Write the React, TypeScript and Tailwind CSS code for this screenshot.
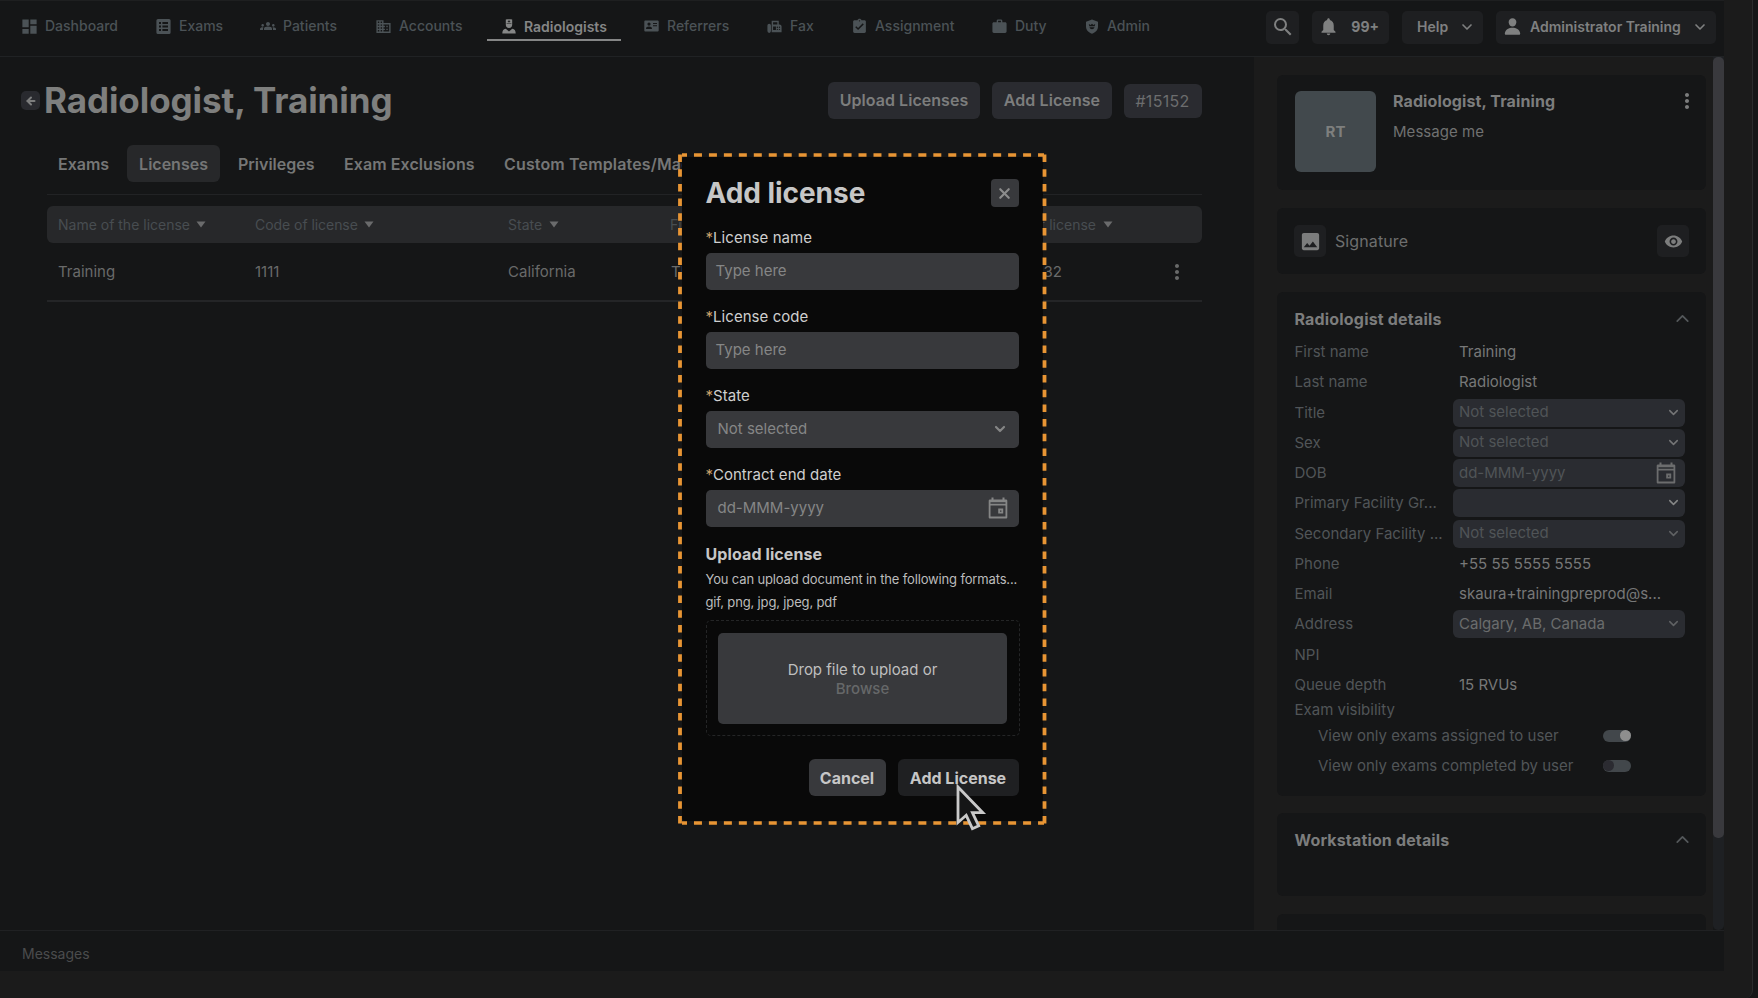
import React from "react";
import {
  MdDashboard, MdGroups, MdBusiness, MdFax, MdAssignmentTurnedIn, MdSearch, MdNotifications,
  MdImage, MdVisibility, MdMoreVert, MdWork,
} from "react-icons/md";
import { IoPerson } from "react-icons/io5";
import { ChevronDown, ChevronUp, X, ArrowLeft } from "lucide-react";

const ExamsIcon = () => (
  <svg viewBox="0 0 15 15" className="size-[15px]" fill="currentColor">
    <path fillRule="evenodd" d="M2 0h11a1.6 1.6 0 0 1 1.6 1.6v11.800A1.6 1.6 0 0 1 13 15H2A1.6 1.6 0 0 1 .4 13.400V1.600A1.6 1.6 0 0 1 2 0ZM3 3v2h2V3H3Zm3.400 0v2H12V3H6.400ZM3 6.500v2h2v-2H3Zm3.400 0v2H12v-2H6.400ZM3 10v2h2v-2H3Zm3.400 0v2H12v-2H6.400Z" />
  </svg>
);

const RadiologistIcon = () => (
  <svg viewBox="0 0 14 15" className="h-[15px] w-[14px]" fill="currentColor">
    <path fillRule="evenodd" d="M3.800.6C5.600 0 8.400 0 10.200.6V5.600a3.200 3.400 0 0 1-6.400 0V.600ZM6.600 1.200v.8h-.8v.8h.8v.8h.8v-.8h.8V2h-.8v-.8h-.8ZM4.600 4.600v.5h4.800v-.5H4.600Z" />
    <path d="M.3 14.500c0-2.800.8-4.200 3.500-4.800L7 12.600l3.200-2.900c2.700.6 3.500 2 3.500 4.800H.300Z" />
  </svg>
);

const ReferrerIcon = () => (
  <svg viewBox="0 0 15 12" className="h-[12px] w-[15px]" fill="currentColor">
    <path fillRule="evenodd" d="M1.200.5h12.600c.5 0 .9.4.9.9v9.200c0 .5-.4.9-.9.9H1.200a.9.9 0 0 1-.9-.9V1.400c0-.5.4-.9.9-.9ZM5 2.500a1.600 1.600 0 1 0 0 3.200 1.600 1.600 0 0 0 0-3.200ZM2 9h6c0-1.800-1.200-2.500-3-2.500S2 7.200 2 9Zm7-6v1h4V3H9Zm0 2.200v1h4v-1H9Z" />
  </svg>
);

const AdminIcon = () => (
  <svg viewBox="0 0 14 16" className="h-[15px] w-[14px]" fill="currentColor">
    <path fillRule="evenodd" d="M7 .4 13.400 2.800v5.200c0 3.700-2.600 6.400-6.400 7.600C3.200 14.400.6 11.700.6 8V2.800L7 .4ZM3.600 5.400l.5 2.300h5.800l.5-2.300-1.900.9L7 5 5.500 6.300l-1.900-.9Zm.7 3.500c.4 1.300 1.400 2 2.700 2s2.300-.7 2.700-2H4.300Z" />
  </svg>
);

const CalendarIcon = ({ className }: { className: string }) => (
  <svg viewBox="0 0 20 22" className={`h-[22px] w-[20px] ${className}`} fill="currentColor">
    <path fillRule="evenodd" d="M3.500.5h2v2h9v-2h2v2H18c.8 0 1.300.6 1.300 1.300v16.400c0 .7-.5 1.300-1.300 1.300H2c-.8 0-1.300-.6-1.300-1.300V3.800c0-.7.5-1.300 1.300-1.300h1.500v-2ZM2.500 5.200v1.600h15V5.200h-15Zm0 3.400v11h15v-11h-15Zm7.700 3h5v5h-5v-5Zm1.800 1.800v1.400h1.400v-1.400H12Z" />
  </svg>
);

const Triangle = () => (
  <svg viewBox="0 0 10 7" className="-ml-px h-[7px] w-[10px] text-[#6a6b6c]" fill="currentColor">
    <path d="M.5.500h9L5 6.500Z" />
  </svg>
);

type NavProps = { icon: React.ReactNode; label: string; className: string };
const NavItem = ({ icon, label, className }: NavProps) => (
  <div className={`flex shrink-0 items-center gap-[8px] ${className}`}>
    <span className="flex w-[15px] justify-center">{icon}</span>
    <span>{label}</span>
  </div>
);

const Card = ({ className, children }: { className: string; children?: React.ReactNode }) => (
  <section className={`shrink-0 rounded-[6px] bg-[#151617] ${className}`}>{children}</section>
);

const Row = ({ label, children }: { label: string; children?: React.ReactNode }) => (
  <div className="flex h-[30.250px] items-center">
    <div className="w-[158.500px] shrink-0 whitespace-nowrap text-[#515558]">{label}</div>
    {children}
  </div>
);
const Value = ({ children }: { children: React.ReactNode }) => <div className="pl-[6px] text-[#777878]">{children}</div>;
const Select = ({ text, className = "text-[#505457]", chevron = "text-[#747576]" }: { text: string; className?: string; chevron?: string }) => (
  <div className={`flex h-[28px] w-[232px] items-center justify-between rounded-[6px] bg-[#2a2c31] pl-[6px] pr-[4px] ${className}`}>
    <span className="-mt-px">{text}</span>
    <ChevronDown className={`-mt-px size-[15px] ${chevron}`} strokeWidth={2.400} />
  </div>
);
const Toggle = ({ on }: { on?: boolean }) => (
  <div className={`flex h-[12px] w-[28px] items-center rounded-full bg-[#42474b] ${on ? "justify-end" : "justify-start"}`}>
    <span className={`size-[11px] rounded-full ${on ? "bg-[#8e8e8e]" : "bg-[#2b2b31]"}`} />
  </div>
);

const Label = ({ children }: { children: React.ReactNode }) => (
  <div className="h-[30px] text-[15px] leading-[30px] tracking-[0.050px] text-[#cfcfcf]">
    <span className="text-[#c9a06a]">*</span>{children}
  </div>
);

export default function App() {
  return (
    <div className="relative flex h-[998px] w-[1758px] overflow-hidden bg-[#151617] font-['Inter',sans-serif] text-[15px] leading-[20px] text-[#7c7d7d]">
      <div className="flex h-full w-[1753px] flex-col rounded-br-[8px] border-r border-[#2a2b2c] bg-[#1b1b1b]">
        <div className="flex h-[971px] w-[1724px] flex-col bg-[#151617]">
          <header className="flex h-[57px] shrink-0 items-center border-b border-t border-b-[#202224] border-t-[#1e1f20] pl-[22px] pr-[8px]">
            <nav className="flex h-full items-center pb-[5px] text-[14px] font-medium text-[#4b5256]">
              <NavItem className="w-[134px]" icon={<MdDashboard className="size-[19px] shrink-0" />} label="Dashboard" />
              <NavItem className="w-[104px]" icon={<ExamsIcon />} label="Exams" />
              <NavItem className="w-[116px]" icon={<MdGroups className="size-[16px] shrink-0" />} label="Patients" />
              <NavItem className="w-[111px]" icon={<MdBusiness className="size-[17px] shrink-0" />} label="Accounts" />
              <div className="mr-[23px] h-[29px] w-[134px] border-b-[2px] border-[#858686] pl-[14px] pt-[5px] text-[#858686]">
                <NavItem className="font-semibold" icon={<RadiologistIcon />} label="Radiologists" />
              </div>
              <NavItem className="w-[123px]" icon={<ReferrerIcon />} label="Referrers" />
              <NavItem className="w-[85px]" icon={<MdFax className="size-[17px] shrink-0" />} label="Fax" />
              <NavItem className="w-[140px]" icon={<MdAssignmentTurnedIn className="size-[17px] shrink-0" />} label="Assignment" />
              <NavItem className="w-[92px]" icon={<MdWork className="size-[17px] shrink-0" />} label="Duty" />
              <NavItem className="w-[90px]" icon={<AdminIcon />} label="Admin" />
            </nav>
            <div className="mb-[3px] ml-auto flex gap-[13px] text-[14px] font-semibold text-[#7f8080]">
              <div className="flex h-[33px] w-[33px] items-center justify-center rounded-[5px] bg-[#1e1f21]"><MdSearch className="size-[24px]" /></div>
              <div className="flex h-[33px] w-[77px] items-center justify-between rounded-[5px] bg-[#1e1f21] pb-[1px] pl-[6px] pr-[10px] font-bold"><MdNotifications className="size-[21px]" /><span>99+</span></div>
              <div className="flex h-[33px] w-[81px] items-center justify-between rounded-[5px] bg-[#1e1f21] pb-[1px] pl-[15px] pr-[8px]"><span>Help</span><ChevronDown className="size-[16px]" strokeWidth={2.500} /></div>
              <div className="flex h-[33px] w-[220px] items-center rounded-[5px] bg-[#1e1f21] pb-[1px] pl-[7px] pr-[8px]"><IoPerson className="size-[19px]" /><span className="ml-[8px] whitespace-nowrap">Administrator Training</span><ChevronDown className="ml-auto size-[16px]" strokeWidth={2.500} /></div>
            </div>
          </header>

          <div className="flex h-[873px] shrink-0">
            <main className="w-[1254px] shrink-0">
              <div className="flex h-[62px] items-end pl-[21px]">
                <div className="flex items-center">
                  <div className="flex size-[19px] items-center justify-center rounded-[5px] bg-[#292a2f]"><ArrowLeft className="size-[12px]" strokeWidth={4} /></div>
                  <h1 className="ml-[4px] w-[784px] text-[35px] font-bold leading-[37px] tracking-[-0.080px] text-[#7e7f7e]">Radiologist, Training</h1>
                  <div className="flex h-[37px] w-[152px] items-center justify-center rounded-[6px] bg-[#2a2b30] pb-[1px] text-[16px] font-semibold tracking-[0.050px]">Upload Licenses</div>
                  <div className="ml-[12px] flex h-[37px] w-[120px] items-center justify-center rounded-[6px] bg-[#2a2b30] pb-[1px] text-[16px] font-semibold tracking-[0.080px]">Add License</div>
                  <div className="ml-[12px] flex h-[34px] w-[78px] items-center justify-center rounded-[6px] bg-[#2a2b30] pr-[1px] text-[16px] tracking-[0.300px] text-[#6c6d6e]">#15152</div>
                </div>
              </div>
              <div className="ml-[47px] mt-[26px] flex h-[50px] w-[1155px] items-start whitespace-nowrap border-b border-[#222325] text-[16px] font-semibold text-[#757676]">
                <div className="w-[80px] pl-[11px] leading-[38px]">Exams</div>
                <div className="h-[37px] w-[93px] rounded-[6px] bg-[#27282a] text-center leading-[38px]">Licenses</div>
                <div className="w-[106px] pl-[18px] leading-[38px]">Privileges</div>
                <div className="w-[178px] pl-[18px] leading-[38px] tracking-[0.080px]">Exam Exclusions</div>
                <div className="leading-[38px] tracking-[0.150px]">Custom Templates/Macros</div>
              </div>
              <div className="ml-[47px] mt-[11px] flex h-[37px] w-[1155px] items-center rounded-[6px] bg-[#27282a] pl-[11px] text-[14px] text-[#484d51]">
                <div className="flex w-[197px] items-center gap-[7px]">Name of the license <Triangle /></div>
                <div className="flex w-[253px] items-center gap-[7px] tracking-[-0.050px]">Code of license <Triangle /></div>
                <div className="flex w-[162px] items-center gap-[8px]">State <Triangle /></div>
                <div className="w-[281px]">File</div>
                <div className="flex w-[162px] items-center justify-end gap-[8px]">Number of license <Triangle /></div>
              </div>
              <div className="ml-[47px] flex h-[59px] w-[1155px] items-center border-b-2 border-[#242527] pl-[11px] text-[15px] text-[#696a6a]">
                <div className="w-[197px]">Training</div>
                <div className="w-[253px]">1111</div>
                <div className="w-[163px]">California</div>
                <div className="w-[340px]">Thumbnail</div>
                <div className="w-[51px] text-right">10232</div>
                <MdMoreVert className="ml-[103px] size-[24px]" />
              </div>
            </main>

            <aside className="flex h-[873px] w-[459px] shrink-0 flex-col overflow-hidden bg-[#1b1b1b] pl-[23px] pt-[18px]">
              <Card className="flex h-[115px] w-[429px] pl-[18px] pt-[16px]">
                <div className="flex size-[81px] items-center justify-center rounded-[6px] bg-[#42494d] text-[15px] font-bold text-[#7e7f7e]">RT</div>
                <div className="ml-[17px] flex-1">
                  <div className="text-[16px] font-bold tracking-[0.100px]">Radiologist, Training</div>
                  <div className="mt-[11px] text-[15px] tracking-[0.050px] text-[#707171]">Message me</div>
                </div>
                <MdMoreVert className="mr-[7px] mt-[-2px] size-[24px]" />
              </Card>
              <Card className="mt-[18px] flex h-[66px] w-[429px] items-center pl-[17px] pr-[17px]">
                <div className="flex size-[32px] items-center justify-center rounded-[5px] bg-[#1e1f21]"><MdImage className="size-[23px]" /></div>
                <div className="ml-[9px] flex-1 text-[16px] tracking-[0.100px] text-[#6d6e6e]">Signature</div>
                <div className="flex size-[32px] items-center justify-center rounded-[5px] bg-[#1e1f21]"><MdVisibility className="size-[19px]" /></div>
              </Card>
              <Card className="mt-[18px] h-[504px] w-[429px] pl-[17.500px] pr-[13px] pt-[17px]">
                <div className="flex h-[19px] items-center justify-between text-[16px] font-bold tracking-[0.180px]"><span>Radiologist details</span><ChevronUp className="size-[21px] text-[#54585b]" /></div>
                <div className="mt-[9px] text-[15px]">
                  <Row label="First name"><Value>Training</Value></Row>
                  <Row label="Last name"><Value>Radiologist</Value></Row>
                  <Row label="Title"><Select text="Not selected" /></Row>
                  <Row label="Sex"><Select text="Not selected" /></Row>
                  <Row label="DOB">
                    <div className="flex h-[28px] w-[232px] items-center justify-between rounded-[6px] bg-[#2a2c31] pl-[6px] pr-[9px] text-[#505457]">dd-MMM-yyyy<CalendarIcon className="text-[#6c6d6e]" /></div>
                  </Row>
                  <Row label="Primary Facility Gr..."><Select text="" chevron="text-[#858686]" /></Row>
                  <Row label="Secondary Facility ..."><Select text="Not selected" chevron="text-[#606264]" /></Row>
                  <Row label="Phone"><Value>+55 55 5555 5555</Value></Row>
                  <Row label="Email"><Value>skaura+trainingpreprod@s...</Value></Row>
                  <Row label="Address"><Select text="Calgary, AB, Canada" className="text-[#6b6c6d]" chevron="text-[#606264]" /></Row>
                  <Row label="NPI" />
                  <Row label="Queue depth"><Value>15 RVUs</Value></Row>
                  <div className="text-[#515558]">Exam visibility</div>
                  <div className="mt-[0.500px] flex h-[30px] items-center pl-[23.500px] text-[#515558]"><span className="w-[285px]">View only exams assigned to user</span><Toggle on /></div>
                  <div className="flex h-[30px] items-center pl-[23.500px] text-[#515558]"><span className="w-[285px]">View only exams completed by user</span><Toggle /></div>
                </div>
              </Card>
              <Card className="mt-[17px] h-[83px] w-[429px] pl-[17.500px] pr-[13px] pt-[17px]">
                <div className="flex h-[19px] items-center justify-between text-[16px] font-bold tracking-[0.150px]"><span>Workstation details</span><ChevronUp className="size-[21px] text-[#54585b]" /></div>
              </Card>
              <Card className="mt-[18px] h-[60px] w-[429px]" />
            </aside>
            <div className="h-[873px] w-[11px] rounded-b-[5px] bg-[#1e2023]">
              <div className="h-[781px] w-[11px] rounded-[5px] bg-[#39393d]" />
            </div>
          </div>
          <footer className="flex h-[41px] items-center border-t border-[#202123] pl-[22px] pt-[6px] text-[14px] text-[#4b4c4d]">Messages</footer>
        </div>
      </div>

      <div className="absolute left-[678px] top-[153px] h-[672px] w-[369px] p-[4px]">
        <div className="flex h-[664px] w-[361px] flex-col rounded-[4px] bg-[#090909] pl-[23.500px] pr-[24.500px] pt-[17px]">
          <div className="flex h-[38px] items-center justify-between">
            <h2 className="text-[28px] font-bold leading-[34px] tracking-[-0.050px] text-[#c6c6c6]">Add license</h2>
            <div className="flex size-[28px] items-center justify-center rounded-[4px] bg-[#38393c]"><X className="size-[17px] text-[#8c8c8c]" strokeWidth={3} /></div>
          </div>
          <div className="mt-[11px] text-[#858686]">
            <Label>License name</Label>
            <div className="mb-[12px] flex h-[37px] items-center rounded-[5px] bg-[#38393c] pb-[1px] pl-[10px]">Type here</div>
            <Label>License code</Label>
            <div className="mb-[12px] flex h-[37px] items-center rounded-[5px] bg-[#38393c] pb-[1px] pl-[10px]">Type here</div>
            <Label>State</Label>
            <div className="mb-[12px] flex h-[37px] items-center justify-between rounded-[5px] bg-[#38393c] pb-[2px] pl-[12px] pr-[11px]">Not selected<ChevronDown className="size-[16px]" strokeWidth={3.200} /></div>
            <Label>Contract end date</Label>
            <div className="mb-[12px] flex h-[37px] items-center justify-between rounded-[5px] bg-[#38393c] pb-[1px] pl-[12px] pr-[11px]">dd-MMM-yyyy<CalendarIcon className="" /></div>
          </div>
          <div className="h-[29px] text-[16px] font-bold leading-[30px] tracking-[0.100px] text-[#c6c6c6]">Upload license</div>
          <div className="h-[23px] whitespace-nowrap text-[13px] leading-[22px] tracking-[-0.150px] text-[#bcbcbc]">You can upload document in the following formats...</div>
          <div className="h-[23px] text-[13px] leading-[23px] tracking-[-0.150px] text-[#bcbcbc]">gif, png, jpg, jpeg, pdf</div>
          <div className="mt-[6px] h-[116px] w-[314px] shrink-0 rounded-[5px] border border-dashed border-[#242526] px-[11.500px] pt-[12px]">
            <div className="flex h-[91px] flex-col items-center justify-center rounded-[5px] bg-[#38393c] text-[15px] leading-[19px] text-[#bfbfbf]">
              <span>Drop file to upload or</span>
              <span className="font-medium text-[#666869]">Browse</span>
            </div>
          </div>
          <div className="mt-[23px] flex justify-end gap-[12px] text-[16px] font-bold text-[#c6c6c6]">
            <div className="flex h-[37px] w-[77px] items-center justify-center rounded-[6px] bg-[#38393c]">Cancel</div>
            <div className="flex h-[37px] w-[121px] items-center justify-center rounded-[6px] bg-[#1f2022]">Add License</div>
          </div>
        </div>
      </div>
      <svg className="absolute left-[678px] top-[153px]" width="369" height="672" viewBox="0 0 369 672" fill="none">
        <path d="M4 2H366M4 670H366" stroke="#E89534" strokeWidth="3.400" strokeDasharray="8 6.960" strokeDashoffset="3" />
        <path d="M2 1.500V671M366.500 1.500V671" stroke="#E89534" strokeWidth="3.800" strokeDasharray="7.500 7.200" />
      </svg>
      <svg className="absolute left-[955px] top-[782px]" width="34" height="50" viewBox="0 0 34 50">
        <path d="M3 5v35.500l8.200-7.200 6.200 13.400 6.300-2.800-6.300-13.200h10.400L3 5Z" fill="#151617" stroke="#c9c9c9" strokeWidth="2.800" />
      </svg>
    </div>
  );
}
